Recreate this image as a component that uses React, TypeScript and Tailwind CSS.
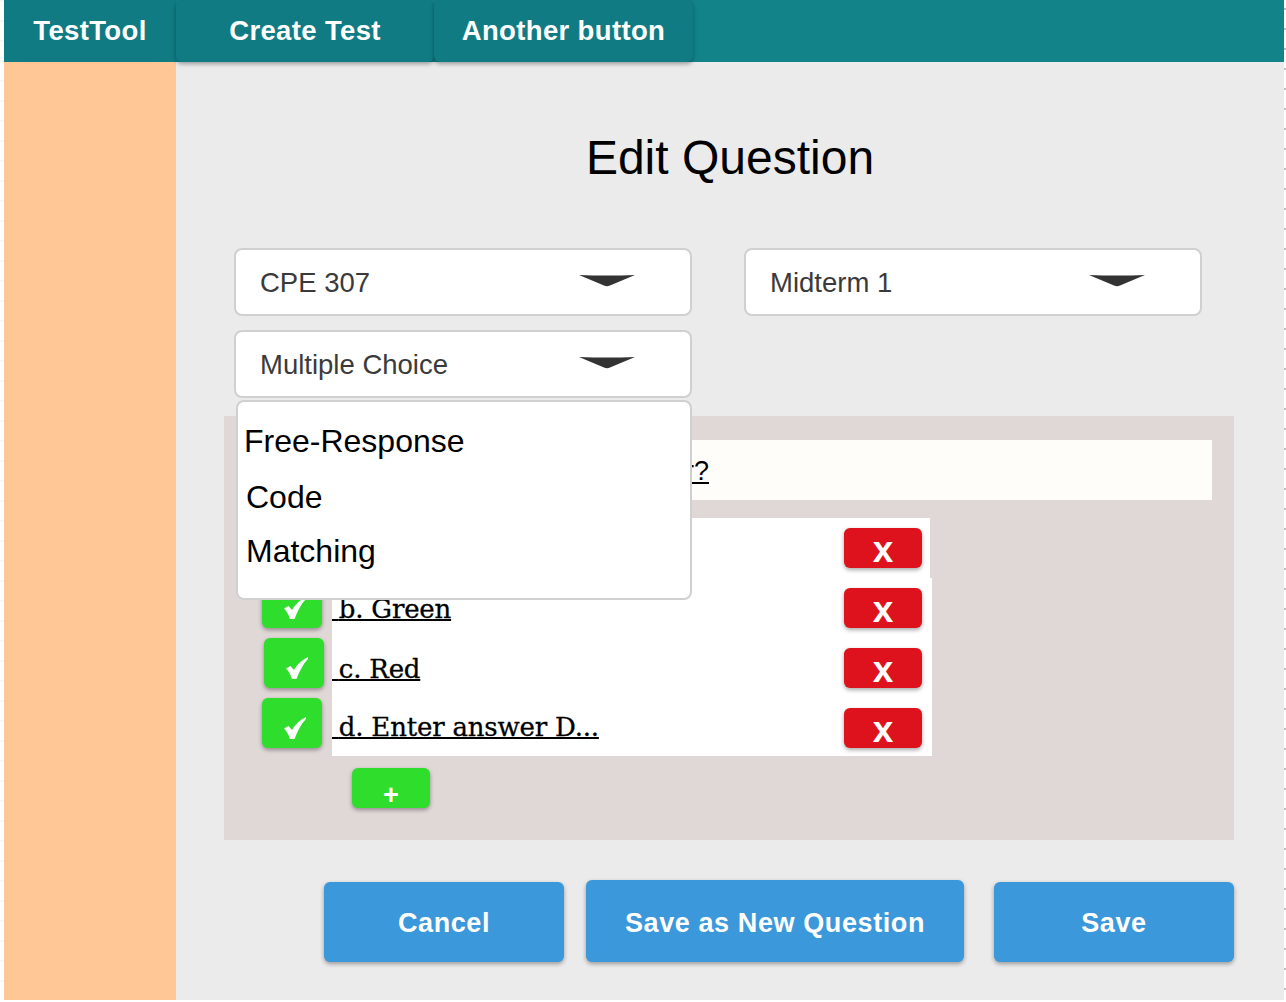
const SANS = "font-['Liberation_Sans',Arial,sans-serif]";
const SHADOW = "shadow-[0_2px_4px_rgba(0,0,0,0.35)]";

function Chevron() {
  return (
    <svg width="56" height="13" viewBox="0 0 56 13" className="fill-[#333333]">
      <path d="M0 1 Q14 1.5 28 1.5 Q42 1.5 56 1 L31 11.5 Q28 13 25 11.5 Z" />
    </svg>
  );
}

function Select({ label }: { label: string }) {
  return (
    <div className="flex h-[68px] w-[458px] items-center justify-between rounded-lg border-2 border-[#d0d0d0] bg-white pl-[24px] pr-[55px] text-[27.5px] text-[#3a3a3a]">
      <span className="pt-[2px]">{label}</span>
      <span className="-mt-[4px] flex">
        <Chevron />
      </span>
    </div>
  );
}

function NavButton({ label, width }: { label: string; width: string }) {
  return (
    <button className={`flex h-[62px] ${width} items-center justify-center rounded-md bg-[#117b83] text-[27.5px] font-bold tracking-[0.35px] text-white ${SHADOW}`}>
      {label}
    </button>
  );
}

function CheckButton({ className }: { className: string }) {
  return (
    <button className={`relative h-[50px] w-[60px] shrink-0 rounded-md bg-[#2fde2c] ${SHADOW} ${className}`}>
      <svg width="22" height="22" viewBox="0 0 22 22" className="absolute left-[22px] top-[19px] fill-white">
        <path d="M0 11.5 L4.5 9 L8 13 C11 7.5 16 3 22 0 L22 2 C17 7 13.5 14 10.5 22 L6 22 C4.5 17.5 2.5 14 0 11.5 Z" />
      </svg>
    </button>
  );
}

function RemoveButton() {
  return (
    <button className={`flex h-[40px] w-[78px] items-end justify-center overflow-hidden rounded-md bg-[#de121c] pt-[4px] text-[37px] font-bold leading-[36px] text-white ${SHADOW}`}>
      x
    </button>
  );
}

const answers = [
  { text: "a. Blue", height: "h-[60px]", check: "ml-[38px]", gap: "ml-[10px]", width: "w-[598px]", redRight: "mr-[8px]", pad: "pt-[15px]" },
  { text: "b. Green", height: "h-[60px]", check: "ml-[38px]", gap: "ml-[10px]", width: "w-[600px]", redRight: "mr-[10px]", pad: "pt-[15px]" },
  { text: "c. Red", height: "h-[60px]", check: "ml-[40px]", gap: "ml-[8px]", width: "w-[600px]", redRight: "mr-[10px]", pad: "pt-[15px]" },
  { text: "d. Enter answer D...", height: "h-[58px]", check: "ml-[38px]", gap: "ml-[10px]", width: "w-[600px]", redRight: "mr-[10px]", pad: "pt-[13px]" },
];

const footerButton = `rounded-md bg-[#3b98da] text-[27px] font-bold tracking-[0.6px] text-white ${SHADOW}`;

export default function App() {
  return (
    <div className={`flex h-[1000px] w-[1286px] overflow-hidden bg-white ${SANS}`}>
      <div className="w-[4px] bg-[repeating-linear-gradient(to_bottom,#f7f7f7_0,#f7f7f7_2px,white_2px,white_20px)]" />
      <div className="flex w-[1280px] flex-col">
        <header className="relative z-10 flex h-[62px] bg-[#13838a]">
          <div className="flex w-[172px] items-center justify-center bg-[#117b83] text-[27.5px] font-bold tracking-[0.35px] text-white">
            TestTool
          </div>
          <NavButton label="Create Test" width="w-[258px]" />
          <NavButton label="Another button" width="w-[259px]" />
        </header>

        <div className="flex flex-1">
          <aside className="w-[172px] bg-[#ffc795]" />
          <main className="relative flex-1 bg-[#ebebeb]">
            <h1 className="mt-[66px] text-center text-[48px] font-normal leading-[60px] text-black">Edit Question</h1>

            <div className="ml-[58px] mt-[60px] flex gap-[52px]">
              <Select label="CPE 307" />
              <Select label="Midterm 1" />
            </div>
            <div className="ml-[58px] mt-[14px]">
              <Select label="Multiple Choice" />
            </div>

            <section className="ml-[48px] mt-[18px] h-[424px] w-[1010px] bg-[#e0d7d7] pt-[24px]">
              <div className="ml-[22px] h-[60px] w-[966px] bg-[#fffdfa] pl-[40px] pt-[11px] text-right">
                <span className="mr-[503px] text-[27px] text-black underline">What is your favorite color?</span>
              </div>
              <div className="mt-[18px] flex flex-col">
                {answers.map((answer) => (
                  <div key={answer.text} className={`flex ${answer.height} items-start`}>
                    <CheckButton className={answer.check} />
                    <div className={`flex h-full ${answer.gap} ${answer.width} justify-between bg-white`}>
                      <span className={`${answer.pad} font-['DejaVu_Serif',serif] text-[26px] leading-[32px] tracking-[-0.2px] text-black underline decoration-2 [-webkit-text-stroke:0.3px_black]`}>
                        <span className="text-[22px]">{"\u00a0"}</span>
                        {answer.text}
                      </span>
                      <span className={`${answer.redRight} mt-[10px]`}>
                        <RemoveButton />
                      </span>
                    </div>
                  </div>
                ))}
              </div>
              <button className={`ml-[128px] mt-[12px] flex h-[40px] w-[78px] items-end justify-center rounded-md bg-[#2fde2c] text-[27px] font-bold leading-[25px] text-white ${SHADOW}`}>
                +
              </button>
            </section>

            <div className="ml-[148px] mt-[40px] flex items-end">
              <button className={`h-[80px] w-[240px] pt-[2px] ${footerButton}`}>Cancel</button>
              <button className={`ml-[22px] h-[82px] w-[378px] pt-[4px] ${footerButton}`}>Save as New Question</button>
              <button className={`ml-[30px] h-[80px] w-[240px] pt-[2px] ${footerButton}`}>Save</button>
            </div>

            {/* Open type dropdown */}
            <div className="absolute left-[60px] top-[338px] h-[200px] w-[456px] rounded-lg border-2 border-[#d0d0d0] bg-white text-[32px] leading-[40px] text-black">
              <div className="ml-[6px] mt-[19px]">Free-Response</div>
              <div className="ml-[8px] mt-[16px]">Code</div>
              <div className="ml-[8px] mt-[14px]">Matching</div>
            </div>
          </main>
        </div>
      </div>
      <div className="w-[2px] bg-[repeating-linear-gradient(to_bottom,white_0,white_8px,#bdbdbd_8px,#bdbdbd_10px,white_10px,white_20px)]" />
    </div>
  );
}
